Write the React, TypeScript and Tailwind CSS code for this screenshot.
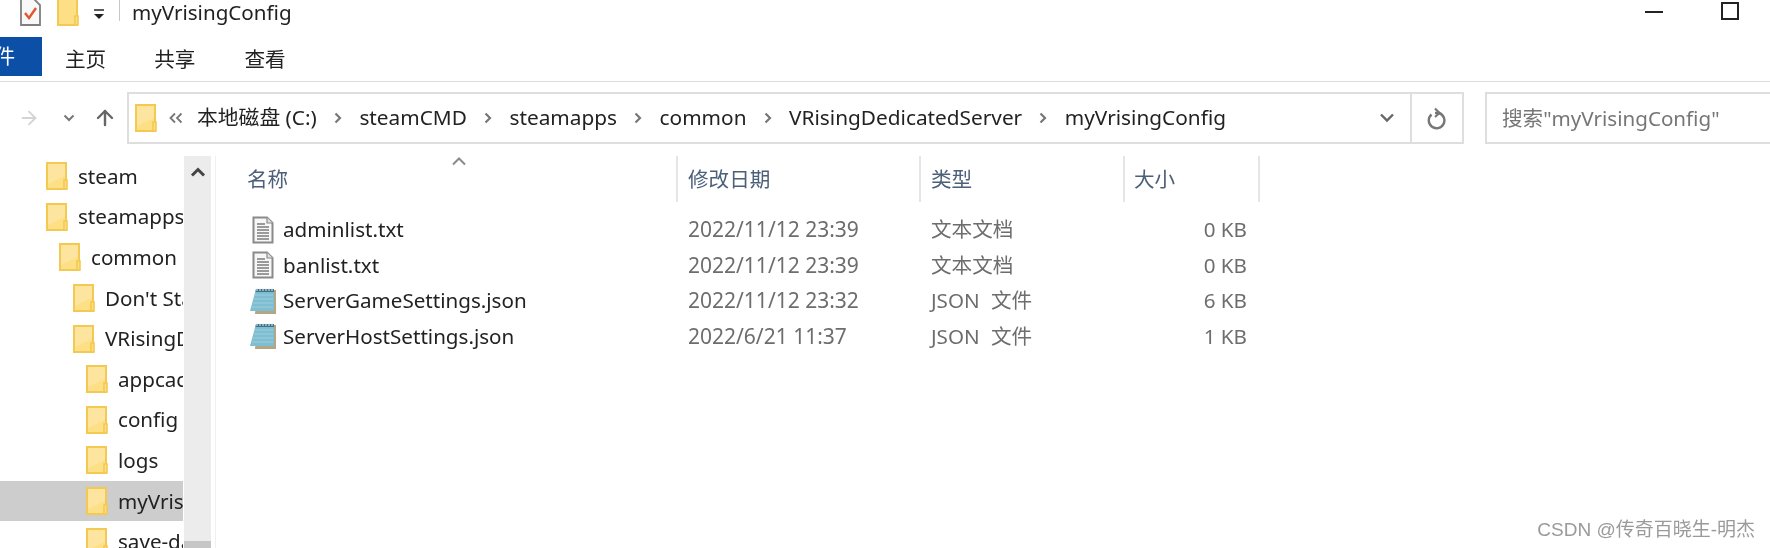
import { ArrowRight, ArrowUp } from 'lucide-react';

const treeItems = [
    { name: 'steam', indent: 'pl-[46px]' },
    { name: 'steamapps', indent: 'pl-[46px]' },
    { name: 'common', indent: 'pl-[59px]' },
    { name: "Don't Starve Together", indent: 'pl-[73px]' },
    { name: 'VRisingDedicatedServer', indent: 'pl-[73px]' },
    { name: 'appcache', indent: 'pl-[86px]' },
    { name: 'config', indent: 'pl-[86px]' },
    { name: 'logs', indent: 'pl-[86px]' },
    { name: 'myVrisingConfig', indent: 'pl-[86px]', selected: true },
    { name: 'save-data', indent: 'pl-[86px]' },
];

const files = [
    { name: 'adminlist.txt', date: '2022/11/12 23:39', type: '文本文档', size: '0 KB', json: false },
    { name: 'banlist.txt', date: '2022/11/12 23:39', type: '文本文档', size: '0 KB', json: false },
    { name: 'ServerGameSettings.json', date: '2022/11/12 23:32', type: 'JSON 文件', size: '6 KB', json: true },
    { name: 'ServerHostSettings.json', date: '2022/6/21 11:37', type: 'JSON 文件', size: '1 KB', json: true },
];

const crumbs = ['steamCMD', 'steamapps', 'common', 'VRisingDedicatedServer', 'myVrisingConfig'];

function FolderIcon() {
    return (
        <svg width="22" height="28" viewBox="0 0 22 28" className="shrink-0">
            <rect x="1" y="1" width="19" height="26" fill="#fddf85" stroke="#f4c951" strokeWidth="2" />
            <path d="M2 2 L19 2 L19 14 L2 22 Z" fill="#fdeab0" opacity="0.6" />
            <rect x="18" y="18" width="3" height="9" fill="#fddf85" stroke="#f4c951" strokeWidth="1.6" />
        </svg>
    );
}

function TextFileIcon() {
    return (
        <svg width="22" height="28" viewBox="0 0 22 28">
            <path d="M1.5 1.5 H15 L20.5 7 V26.5 H1.5 Z" fill="#f7f7f7" stroke="#8a8a8a" strokeWidth="2" />
            <path d="M15 1.5 V7 H20.5" fill="#e0e0e0" stroke="#8a8a8a" strokeWidth="1.2" />
            <path d="M5 8 H13 M5 11 H17 M5 14 H17 M5 17 H17 M5 20 H17 M5 23 H17" stroke="#7c7c7c" strokeWidth="1.4" />
        </svg>
    );
}

function NotepadIcon() {
    return (
        <svg width="28" height="28" viewBox="0 0 28 28">
            <path d="M8 3 H27 V27 H6 Z" fill="#b3a685" />
            <path d="M7 2 H25 V24 H1 Z" fill="#7fbdd0" />
            <path d="M6 8 H24 M5 12 H24 M4 16 H24 M3 20 H24" stroke="#93c9d8" strokeWidth="1.4" />
            <path d="M7 2 H25 V5 H6.5 Z" fill="#3f7186" />
            <path d="M8 1 V4 M11 1 V4 M14 1 V4 M17 1 V4 M20 1 V4 M23 1 V4" stroke="#e8eef0" strokeWidth="1" />
        </svg>
    );
}

function CrumbChevron() {
    return (
        <svg width="8" height="12" viewBox="0 0 8 12" className="shrink-0">
            <path d="M1.5 1.5 L6 6 L1.5 10.5" fill="none" stroke="#777" strokeWidth="2.2" />
        </svg>
    );
}

function Caret({ width, height, color, stroke }: { width: number; height: number; color: string; stroke: number }) {
    return (
        <svg width={width} height={height} viewBox="0 0 16 10" className="shrink-0">
            <path d="M2 8.5 L8 2.5 L14 8.5" fill="none" stroke={color} strokeWidth={stroke} />
        </svg>
    );
}

export default function App() {
    return (
        <div className="relative h-[548px] w-[1770px] overflow-hidden bg-white font-['Noto_Sans','Noto_Sans_CJK_SC',sans-serif] text-[20.6px] text-[#222] blur-[0.6px]">
            {/* title bar */}
            <div className="flex h-[37px] items-start">
                <svg width="21" height="26" viewBox="0 0 21 26" className="ml-[20px]">
                    <path d="M1 -1 H14 L20 5 V25 H1 Z" fill="#f8f8f8" stroke="#7f7f7f" strokeWidth="1.8" />
                    <path d="M5 13 L9 18 L16 8" fill="none" stroke="#e2562d" strokeWidth="2.4" />
                </svg>
                <svg width="22" height="26" viewBox="0 0 22 26" className="ml-[16px]">
                    <rect x="1" y="-2" width="19" height="27" fill="#fddf85" stroke="#f4c951" strokeWidth="2" />
                    <rect x="18" y="16" width="3" height="9" fill="#fddf85" stroke="#f4c951" strokeWidth="1.6" />
                </svg>
                <svg width="10" height="11" viewBox="0 0 10 11" className="ml-[15px] mt-[9px]">
                    <path d="M0 1 H10" stroke="#333" strokeWidth="1.6" />
                    <path d="M0 5 H10 L5 10 Z" fill="#222" />
                </svg>
                <div className="ml-[15px] h-[21px] w-px bg-[#c8c8c8]" />
                <div className="ml-[12px] leading-[24px]">myVrisingConfig</div>
                <div className="ml-auto mr-[58px] mt-[11px] h-[2px] w-[18px] bg-[#222]" />
                <div className="mr-[31px] mt-[2px] h-[18px] w-[18px] border-2 border-[#222]" />
            </div>

            {/* ribbon tabs */}
            <div className="flex h-[45px] items-start border-b border-[#dcdcdc]">
                <div className="flex h-[39px] w-[42px] items-center justify-end overflow-hidden bg-[#0b50a6] pr-[27px] whitespace-nowrap text-white">
                    文件
                </div>
                <div className="ml-[23px] flex h-[39px] items-center pt-[5px]">主页</div>
                <div className="ml-[48px] flex h-[39px] items-center pt-[5px]">共享</div>
                <div className="ml-[49px] flex h-[39px] items-center pt-[5px]">查看</div>
            </div>

            {/* address row */}
            <div className="flex h-[74px] items-start pt-[10px]">
                <div className="flex h-[52px] w-[127px] items-center">
                    <ArrowRight size={22} strokeWidth={2} className="ml-[18px] text-[#d4d4d4]" />
                    <svg width="12" height="8" viewBox="0 0 12 8" className="ml-[23px]">
                        <path d="M1.5 1.5 L6 6 L10.5 1.5" fill="none" stroke="#777" strokeWidth="2" />
                    </svg>
                    <ArrowUp size={24} strokeWidth={2.4} className="ml-[18px] text-[#666]" />
                </div>
                <div className="flex h-[52px] w-[1337px] items-center border-2 border-[#dedede] text-[20.8px]">
                    <div className="ml-[6px]"><FolderIcon /></div>
                    <svg width="14" height="12" viewBox="0 0 14 12" className="ml-[12px] shrink-0">
                        <path d="M6 1.5 L1.5 6 L6 10.5 M12.5 1.5 L8 6 L12.5 10.5" fill="none" stroke="#777" strokeWidth="1.8" />
                    </svg>
                    <span className="ml-[14px] whitespace-nowrap">本地磁盘 (C:)</span>
                    {crumbs.map((crumb) => (
                        <div key={crumb} className="flex items-center">
                            <div className="ml-[17px] mr-[17.6px]"><CrumbChevron /></div>
                            <span>{crumb}</span>
                        </div>
                    ))}
                    <svg width="16" height="10" viewBox="0 0 16 10" className="ml-auto mr-[15px]">
                        <path d="M2 1.5 L8 7.5 L14 1.5" fill="none" stroke="#666" strokeWidth="2.4" />
                    </svg>
                    <div className="flex h-full w-[52px] items-center justify-center border-l-2 border-[#dedede]">
                        <svg width="20" height="24" viewBox="0 0 20 24">
                            <path d="M4.5 8.5 A7.8 7.8 0 1 0 12 7 L8 7" fill="none" stroke="#777" strokeWidth="2.4" />
                            <path d="M8 2.5 L12.5 7 L8 11" fill="none" stroke="#777" strokeWidth="2.2" />
                        </svg>
                    </div>
                </div>
                <div className="ml-[21px] flex h-[52px] flex-1 items-center border-2 border-r-0 border-[#dedede] pl-[15px] text-[#767676]">
                    搜索"myVrisingConfig"
                </div>
            </div>

            {/* body */}
            <div className="flex h-[392px]">
                <div className="mr-px w-[183px] overflow-hidden">
                    {treeItems.map((item) => (
                        <div
                            key={item.name}
                            className={`flex h-[40.6px] items-center gap-[10px] whitespace-nowrap ${item.indent} ${item.selected ? 'bg-[#cdcdcd]' : ''}`}
                        >
                            <FolderIcon />
                            <span>{item.name}</span>
                        </div>
                    ))}
                </div>
                <div className="flex w-[27px] flex-col items-center justify-between bg-[#ececec] pt-[11px]">
                    <Caret width={16} height={10} color="#444" stroke={3} />
                    <div className="h-[7px] w-full bg-[#c6c6c6]" />
                </div>
                <div className="ml-[4px] w-px bg-[#f0f0f0]" />

                <div className="relative flex-1">
                    <div className="absolute left-[235px] top-[0px]">
                        <Caret width={16} height={10} color="#8a8a8a" stroke={2} />
                    </div>
                    <div className="flex h-[46px] items-center text-[#4c607a]">
                        <div className="flex h-full w-[462px] items-center border-r-2 border-[#e5e5e5] pl-[31px]">名称</div>
                        <div className="flex h-full w-[243px] items-center border-r-2 border-[#e5e5e5] pl-[10px]">修改日期</div>
                        <div className="flex h-full w-[204px] items-center border-r-2 border-[#e5e5e5] pl-[10px]">类型</div>
                        <div className="flex h-full w-[135px] items-center border-r-2 border-[#e5e5e5] pl-[9px]">大小</div>
                    </div>
                    <div className="pt-[10px]">
                        {files.map((file) => (
                            <div key={file.name} className="flex h-[35.5px] items-center text-[#6d6d6d]">
                                <div className="flex w-[462px] items-center pl-[33px] text-[#222]">
                                    <div className="flex w-[28px] justify-center">
                                        {file.json ? <NotepadIcon /> : <TextFileIcon />}
                                    </div>
                                    <span className="ml-[6px]">{file.name}</span>
                                </div>
                                <div className="w-[243px] pl-[10px] text-[21px]">{file.date}</div>
                                <div className="w-[204px] pl-[10px] [word-spacing:6px]">{file.type}</div>
                                <div className="w-[135px] pr-[13px] text-right">{file.size}</div>
                            </div>
                        ))}
                    </div>
                </div>
            </div>

            <div className="absolute right-[15px] top-[518px] font-['Liberation_Sans','Noto_Sans_CJK_SC',sans-serif] text-[19px] leading-[24px] text-[#9a9a9a]">
                CSDN @传奇百晓生-明杰
            </div>
        </div>
    );
}
